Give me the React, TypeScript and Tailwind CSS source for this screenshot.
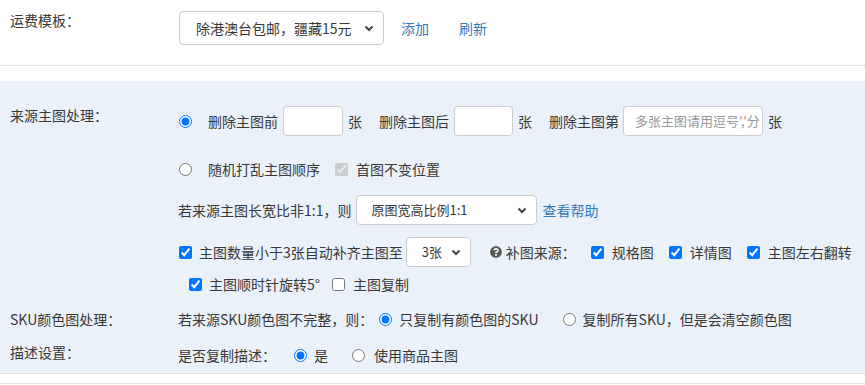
import { FaQuestionCircle } from 'react-icons/fa';

const Chevron = () => (
  <svg width="10" height="7" viewBox="0 0 10 7" className="shrink-0">
    <path d="M1.5 1.5l3.5 3.5 3.5-3.5" fill="none" stroke="#444" strokeWidth="2" />
  </svg>
);

const Radio = ({ checked = false, className = '' }: { checked?: boolean; className?: string }) => (
  <input type="radio" readOnly checked={checked} className={`m-0 h-[13px] w-[13px] shrink-0 ${className}`} />
);

const Check = ({
  checked = false,
  disabled = false,
  className = '',
}: {
  checked?: boolean;
  disabled?: boolean;
  className?: string;
}) => (
  <input
    type="checkbox"
    readOnly
    checked={checked}
    disabled={disabled}
    className={`m-0 h-[13px] w-[13px] shrink-0 ${className}`}
  />
);

const Link = ({ children, className = '' }: { children: React.ReactNode; className?: string }) => (
  <span className={`text-[#337ab7] ${className}`}>{children}</span>
);

export default function App() {
  return (
    <div className="w-[865px] h-[385px] overflow-hidden bg-white text-[14px] leading-[20px] text-[#383838] font-['Microsoft_YaHei','Noto_Sans_CJK_SC',sans-serif]">
      {/* 运费模板 */}
      <div className="flex items-start h-[66px] border-b border-dotted border-[#ccc] pt-[11px]">
        <div className="w-[178px] pl-[10px] shrink-0 -mt-[1px]">运费模板：</div>
        <div className="flex items-center h-[34px] ml-[1px]">
          <div className="flex items-center justify-between w-[205px] h-[34px] shrink-0 rounded-[4px] border border-[#ccc] bg-white pl-[16px] pr-[9px]">
            <span>除港澳台包邮，疆藏15元</span>
            <Chevron />
          </div>
          <Link className="ml-[17px]">添加</Link>
          <Link className="ml-[30px]">刷新</Link>
        </div>
      </div>

      <div className="h-[15px]" />

      {/* 蓝色区域 */}
      <div className="bg-[#eaf1f9] h-[293px] border-b border-[#dcdfe3] pt-[25px]">
        {/* 来源主图处理 */}
        <div className="flex items-start">
          <div className="w-[178px] pl-[10px] shrink-0 -mt-[1px]">来源主图处理：</div>
          <div className="flex flex-col">
            <div className="flex items-center h-[30px]">
              <Radio checked className="ml-[1px]" />
              <span className="ml-[16px]">删除主图前</span>
              <div className="ml-[5px] w-[60px] h-[30px] shrink-0 rounded-[4px] border border-[#ccc] bg-white" />
              <span className="ml-[5px]">张</span>
              <span className="ml-[17px]">删除主图后</span>
              <div className="ml-[5px] w-[59px] h-[30px] shrink-0 rounded-[4px] border border-[#ccc] bg-white" />
              <span className="ml-[5px]">张</span>
              <span className="ml-[17px]">删除主图第</span>
              <div className="ml-[4px] w-[140px] h-[30px] shrink-0 rounded-[4px] border border-[#ccc] bg-white pl-[11px] flex items-center overflow-hidden">
                <span className="block w-[124px] overflow-hidden whitespace-nowrap text-[13px] text-[#999]">多张主图请用逗号','分</span>
              </div>
              <span className="ml-[5px]">张</span>
            </div>

            <div className="flex items-center h-[20px] mt-[23px]">
              <Radio className="ml-[1px]" />
              <span className="ml-[16px]">随机打乱主图顺序</span>
              <Check checked disabled className="ml-[15px]" />
              <span className="ml-[8px]">首图不变位置</span>
            </div>

            <div className="flex items-center h-[30px] mt-[16px]">
              <span>若来源主图长宽比非1:1，则</span>
              <div className="ml-[5px] flex items-center justify-between w-[181px] h-[30px] shrink-0 rounded-[4px] border border-[#ccc] bg-white pl-[14px] pr-[9px] text-[13px]">
                <span>原图宽高比例1:1</span>
                <Chevron />
              </div>
              <Link className="ml-[5px]">查看帮助</Link>
            </div>

            <div className="flex items-center h-[30px] mt-[12px]">
              <Check checked className="ml-[1px]" />
              <span className="ml-[7px]">主图数量小于3张自动补齐主图至</span>
              <div className="ml-[3px] flex items-center justify-between w-[65px] h-[30px] shrink-0 rounded-[4px] border border-[#ccc] bg-white pl-[15px] pr-[9px] text-[13px]">
                <span>3张</span>
                <Chevron />
              </div>
              <FaQuestionCircle className="ml-[19px] text-[#555]" size={12} />
              <span className="ml-[4px]">补图来源：</span>
              <Check checked className="ml-[15px]" />
              <span className="ml-[8px]">规格图</span>
              <Check checked className="ml-[15px]" />
              <span className="ml-[8px]">详情图</span>
              <Check checked className="ml-[15px]" />
              <span className="ml-[8px]">主图左右翻转</span>
            </div>

            <div className="flex items-center h-[20px] mt-[7px]">
              <Check checked className="ml-[11px]" />
              <span className="ml-[7px]">主图顺时针旋转5°</span>
              <Check className="ml-[12px]" />
              <span className="ml-[8px]">主图复制</span>
            </div>
          </div>
        </div>

        {/* SKU颜色图处理 */}
        <div className="flex items-center h-[20px] mt-[15px]">
          <div className="w-[178px] pl-[10px] shrink-0">SKU颜色图处理：</div>
          <span>若来源SKU颜色图不完整，则：</span>
          <Radio checked className="ml-[6px]" />
          <span className="ml-[7px]">只复制有颜色图的SKU</span>
          <Radio className="ml-[24px]" />
          <span className="ml-[7px]">复制所有SKU，但是会清空颜色图</span>
        </div>

        {/* 描述设置 */}
        <div className="flex items-start mt-[14px]">
          <div className="w-[178px] pl-[10px] shrink-0 -mt-[1px]">描述设置：</div>
          <div className="flex items-center h-[20px] mt-[2px]">
            <span>是否复制描述：</span>
            <Radio checked className="ml-[18px]" />
            <span className="ml-[7px]">是</span>
            <Radio className="ml-[24px]" />
            <span className="ml-[9px]">使用商品主图</span>
          </div>
        </div>
      </div>

      <div className="h-[10px] border-b border-[#e5e5e5]" />
    </div>
  );
}
